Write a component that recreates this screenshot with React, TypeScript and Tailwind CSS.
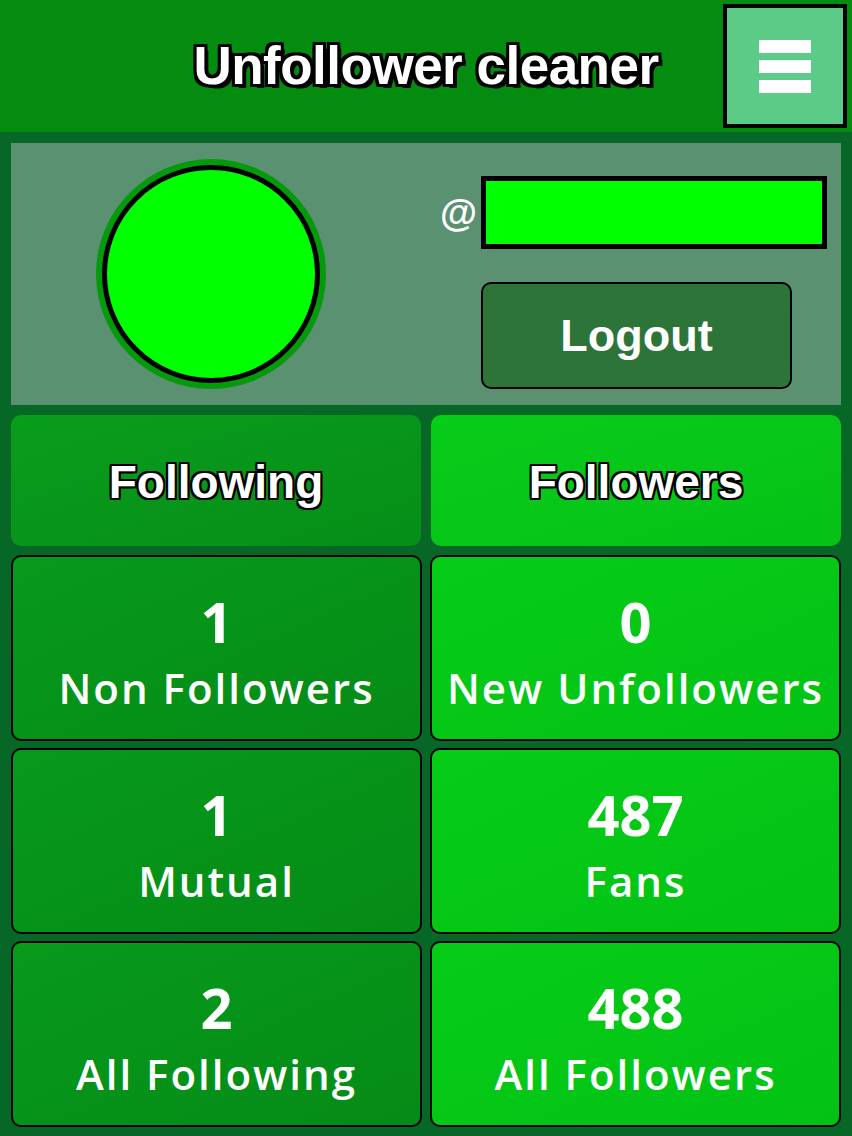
import React from "react";

const outline =
  "[text-shadow:-2px_-2px_0_#000,2px_-2px_0_#000,-2px_2px_0_#000,2px_2px_0_#000,0_-2px_0_#000,0_2px_0_#000,-2px_0_0_#000,2px_0_0_#000]";

const titleOutline =
  "[text-shadow:-3px_-3px_0_#000,3px_-3px_0_#000,-3px_3px_0_#000,3px_3px_0_#000,0_-3px_0_#000,0_3px_0_#000,-3px_0_0_#000,3px_0_0_#000,4px_4px_0_#000]";

type Stat = { value: string; label: string };

const following: Stat[] = [
  { value: "1", label: "Non Followers" },
  { value: "1", label: "Mutual" },
  { value: "2", label: "All Following" },
];

const followers: Stat[] = [
  { value: "0", label: "New Unfollowers" },
  { value: "487", label: "Fans" },
  { value: "488", label: "All Followers" },
];

function StatCard({ stat, light }: { stat: Stat; light: boolean }) {
  return (
    <div
      className={`h-[186px] pt-[6px] rounded-[10px] border-2 border-black flex flex-col items-center justify-center text-white font-['Open_Sans',sans-serif] font-semibold ${
        light
          ? "bg-gradient-to-br from-[#06cc18] to-[#03c214]"
          : "bg-gradient-to-br from-[#079a1b] to-[#058b17]"
      }`}
    >
      <div className="text-[56px] leading-[60px] font-bold">{stat.value}</div>
      <div className="mt-[13px] text-[42px] leading-[48px] tracking-[2px] whitespace-nowrap">
        {stat.label}
      </div>
    </div>
  );
}

export default function App() {
  return (
    <div className="w-[852px] h-[1136px] bg-[#066727] overflow-hidden font-['Liberation_Sans',Arial,sans-serif]">
      {/* header */}
      <header className="h-[132px] bg-[#038c10] flex items-center relative">
        <h1
          className={`flex-1 text-center text-white font-bold text-[53px] tracking-[-0.5px] ${titleOutline}`}
        >
          Unfollower cleaner
        </h1>
        <button className="absolute right-[5px] top-[4px] w-[124px] h-[124px] border-4 border-black bg-[#5ccb88] flex flex-col items-center justify-center gap-[7px]">
          <span className="block w-[52px] h-[13px] bg-white" />
          <span className="block w-[52px] h-[13px] bg-white" />
          <span className="block w-[52px] h-[13px] bg-white" />
        </button>
      </header>

      <main className="px-[11px] pt-[11px] flex flex-col gap-[10px]">
        {/* profile panel */}
        <section className="h-[262px] bg-[#5a9170] flex">
          <div className="w-[400px] flex items-center justify-center">
            <div className="w-[230px] h-[230px] rounded-full bg-[#049a0c] flex items-center justify-center">
              <div className="w-[218px] h-[218px] rounded-full border-[5px] border-black bg-[#00ff00]" />
            </div>
          </div>
          <div className="flex-1 flex flex-col pt-[33px]">
            <div className="flex items-center">
              <span className="w-[70px] text-right pr-[4px] text-white font-bold text-[38px] leading-none">
                @
              </span>
              <div className="w-[346px] h-[73px] border-[5px] border-black bg-[#00ff00]" />
            </div>
            <button className="mt-[33px] ml-[70px] w-[311px] h-[107px] rounded-[10px] border-2 border-black bg-[#2d7439] text-white font-bold text-[45px]">
              Logout
            </button>
          </div>
        </section>

        {/* tabs */}
        <div className="grid grid-cols-2 gap-[10px]">
          <div
            className={`h-[131px] rounded-[10px] bg-gradient-to-br from-[#099d1c] to-[#068e18] flex items-center justify-center text-white font-bold text-[46px] pt-[4px] ${outline}`}
          >
            Following
          </div>
          <div
            className={`h-[131px] rounded-[10px] bg-gradient-to-br from-[#08cc1a] to-[#05c216] flex items-center justify-center text-white font-bold text-[46px] pt-[4px] ${outline}`}
          >
            Followers
          </div>
        </div>

        {/* stats */}
        <div className="grid grid-cols-2 gap-x-[8px] gap-y-[7px] -mt-[1px]">
          {following.map((s, i) => (
            <React.Fragment key={i}>
              <StatCard stat={s} light={false} />
              <StatCard stat={followers[i]} light />
            </React.Fragment>
          ))}
        </div>
      </main>
    </div>
  );
}
